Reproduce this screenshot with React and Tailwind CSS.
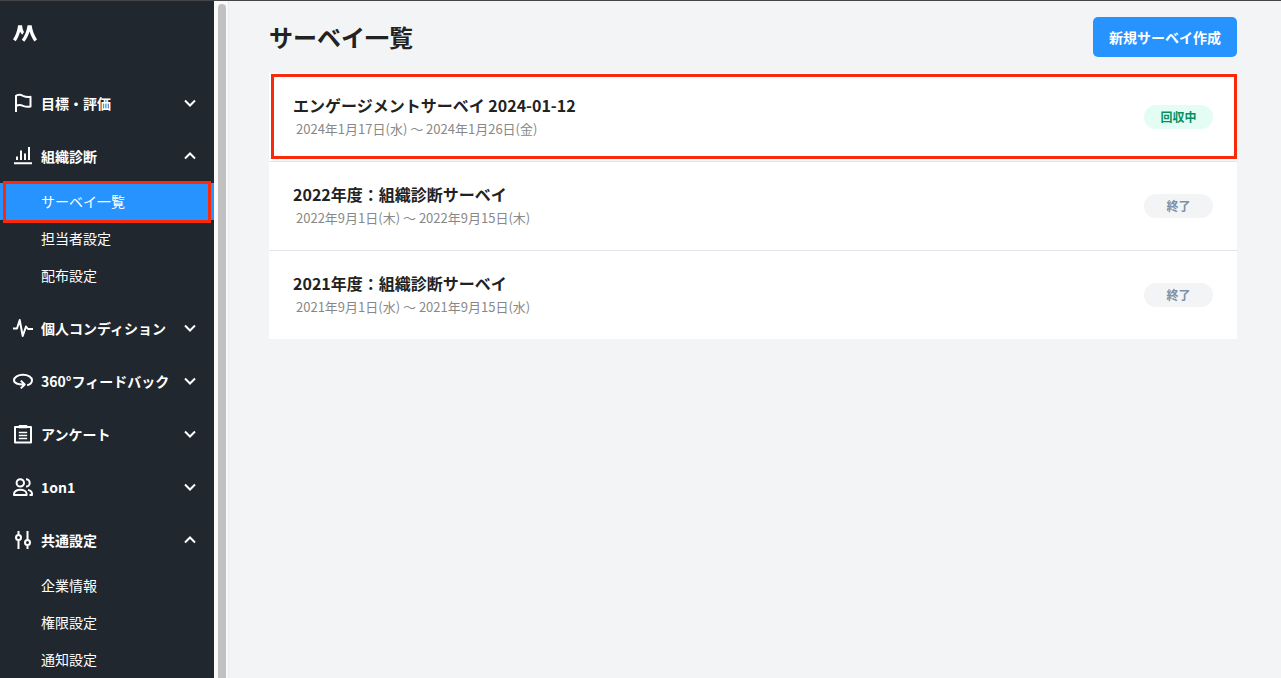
import { useState } from "react";

const icons = {
  flag: (
    <path d="M3 19V2.800C5.200 1.500 7.600 1.600 10 2.800c2.300 1 4.500 1.400 7.500.9V13.600c-2.900.5-5.200.2-7.500-.8-2.400-1-4.800-1-7 .2" />
  ),
  chart: <path d="M1 17.200h18M4 10.500v3.500M8 4.500v9.500M12 7.500v6.500M16 1v13" />,
  pulse: <path d="M0 10.500h4L6.700 2l3 16L13 8.500l2 2.500h5" />,
  rotate: (
    <path d="M14.200 14.300C17.300 13.500 19 11.500 19 9.300 19 6.100 15 3.800 10 3.800S1 6.100 1 9.300c0 2.700 3.600 4.500 10.300 4.200M7.800 9.600l3.900 3.900-3.900 3.900" />
  ),
  clipboard: (
    <>
      <path d="M2 2.900h16v15.600H2z" />
      <path strokeWidth="1.300" d="M5.800 8.500h8.400M5.800 11.500h8.400M5.800 14.500h8.400" />
      <path stroke="none" fill="currentColor" d="M5.800 1h8.400v3.300H5.800z" />
    </>
  ),
  users: (
    <path d="M7.300 2.200a3.700 3.700 0 1 1 0 7.400 3.700 3.700 0 0 1 0-7.400zM13 2.200a3.700 3.700 0 0 1 0 7.400M1 18v-1c0-2.600 3-4.300 6.300-4.300s6.300 1.700 6.300 4.300v1zM15 12.900c2.500.6 4 2 4 4.100v1h-2.500" />
  ),
  sliders: (
    <path d="M5.500 1v4M5.500 10v9M14.500 1v9M14.500 15v4M5.500 5a2.500 2.500 0 1 1 0 5 2.500 2.500 0 0 1 0-5zM14.500 10a2.500 2.500 0 1 1 0 5 2.500 2.500 0 0 1 0-5z" />
  ),
};

const groups = [
  { label: "目標・評価", icon: "flag", items: [] },
  { label: "組織診断", icon: "chart", items: ["サーベイ一覧", "担当者設定", "配布設定"], open: true },
  { label: "個人コンディション", icon: "pulse", items: [] },
  { label: "360°フィードバック", icon: "rotate", items: [] },
  { label: "アンケート", icon: "clipboard", items: [] },
  { label: "1on1", icon: "users", items: [] },
  { label: "共通設定", icon: "sliders", items: ["企業情報", "権限設定", "通知設定"], open: true },
];

const surveys = [
  { title: "エンゲージメントサーベイ 2024-01-12", period: "2024年1月17日(水) 〜 2024年1月26日(金)", active: true },
  { title: "2022年度：組織診断サーベイ", period: "2022年9月1日(木) 〜 2022年9月15日(木)" },
  { title: "2021年度：組織診断サーベイ", period: "2021年9月1日(水) 〜 2021年9月15日(水)" },
];

function NavGroup({ group }) {
  const [open, setOpen] = useState(Boolean(group.open));
  return (
    <li>
      <button
        type="button"
        aria-expanded={open}
        onClick={() => setOpen(!open)}
        className="flex w-full items-center gap-2 pt-4 pr-[18px] pb-[17px] pl-[13px] text-left text-sm leading-5 font-bold"
      >
        <svg className="h-5 w-5 shrink-0" viewBox="0 0 20 20" fill="none" stroke="currentColor" strokeWidth="2" strokeLinejoin="round" aria-hidden="true">
          {icons[group.icon]}
        </svg>
        <span className="grow whitespace-nowrap">{group.label}</span>
        <svg className="h-2 w-3 shrink-0" viewBox="0 0 12 8" fill="none" stroke="currentColor" strokeWidth="2" aria-hidden="true">
          <path d={open ? "M1 6.500l5-5 5 5" : "M1 1.500l5 5 5-5"} />
        </svg>
      </button>
      {open && group.items.length > 0 && (
        <ul className="pb-2">
          {group.items.map((item) => (
            <li key={item}>
              {item === "サーベイ一覧" ? (
                <a href="#" aria-current="page" className="relative block bg-[#2693ff] pt-2 pb-[9px] pl-[41px] text-sm leading-5">
                  {item}
                  <span className="pointer-events-none absolute -top-[2px] right-[3px] -bottom-[3px] left-[3px] border-3 border-[#f9290c]" />
                </a>
              ) : (
                <a href="#" className="block pt-2 pb-[9px] pl-[41px] text-sm leading-5">
                  {item}
                </a>
              )}
            </li>
          ))}
        </ul>
      )}
    </li>
  );
}

export default function App() {
  return (
    <div className="flex h-screen overflow-hidden border-t border-[#444548] bg-[#f3f4f6] font-['Noto_Sans_CJK_JP',sans-serif] text-[#222]">
      <aside className="w-[214px] shrink-0 overflow-hidden bg-[#20272f] text-white">
        <a href="#" aria-label="ホーム" className="block pt-6 pb-[35px] pl-[13px]">
          <svg className="h-[17px] w-6" viewBox="0 0 24 17" fill="currentColor" aria-hidden="true">
            <path d="M0 14.300C2.600 11 4.200 6 5.100.3h4c.2 2.600.8 4.900 1.900 6.700l-1.700 2.800C8.300 8.900 7.600 7.800 7.100 6.700 6.100 10.200 4.600 13.500 2.600 16.300z" />
            <path d="M8.800 14.700c2.900-3.500 4.900-8.600 5.800-14.400h4c.9 5.400 2.700 10.300 5.400 14.200l-2.600 1.900c-2.100-2.800-3.700-6.200-4.800-9.900-1.200 3.900-3 7.500-5.300 10.200z" />
          </svg>
        </a>
        <nav>
          <ul>
            {groups.map((group) => (
              <NavGroup key={group.label} group={group} />
            ))}
          </ul>
        </nav>
      </aside>
      <div className="flex w-[15px] shrink-0 border-r border-[#ececec] bg-[#fafafa] pt-[3px] pl-1" aria-hidden="true">
        <div className="w-2 rounded-t-full bg-[#c1c1c1]" />
      </div>
      <main className="min-w-0 grow pt-4 pr-11 pl-10">
        <header className="mb-4 flex h-10 items-center justify-between">
          <h1 className="text-2xl font-bold">サーベイ一覧</h1>
          <button type="button" className="h-10 rounded-[5px] bg-[#2693ff] px-4 text-sm font-bold text-white">
            新規サーベイ作成
          </button>
        </header>
        <ul className="divide-y divide-[#dfe5ea] bg-white">
          {surveys.map((survey) => (
            <li key={survey.title} className="relative">
              <a href="#" className="flex items-center justify-between px-6 py-5">
                <div>
                  <h2 className="text-base leading-6 font-bold">{survey.title}</h2>
                  <p className="pl-[3px] text-[13px] leading-6 text-[#888]">{survey.period}</p>
                </div>
                <span
                  className={
                    survey.active
                      ? "w-[69px] rounded-full bg-[#e3fdf5] text-center text-xs leading-6 font-bold text-[#07905f]"
                      : "w-[69px] rounded-full bg-[#f3f4f6] text-center text-xs leading-6 font-bold text-[#7c91a7]"
                  }
                >
                  {survey.active ? "回収中" : "終了"}
                </span>
              </a>
              {survey.active && (
                <span className="pointer-events-none absolute top-px right-0 bottom-[2px] left-[2px] border-3 border-[#f9290c]" />
              )}
            </li>
          ))}
        </ul>
      </main>
    </div>
  );
}
